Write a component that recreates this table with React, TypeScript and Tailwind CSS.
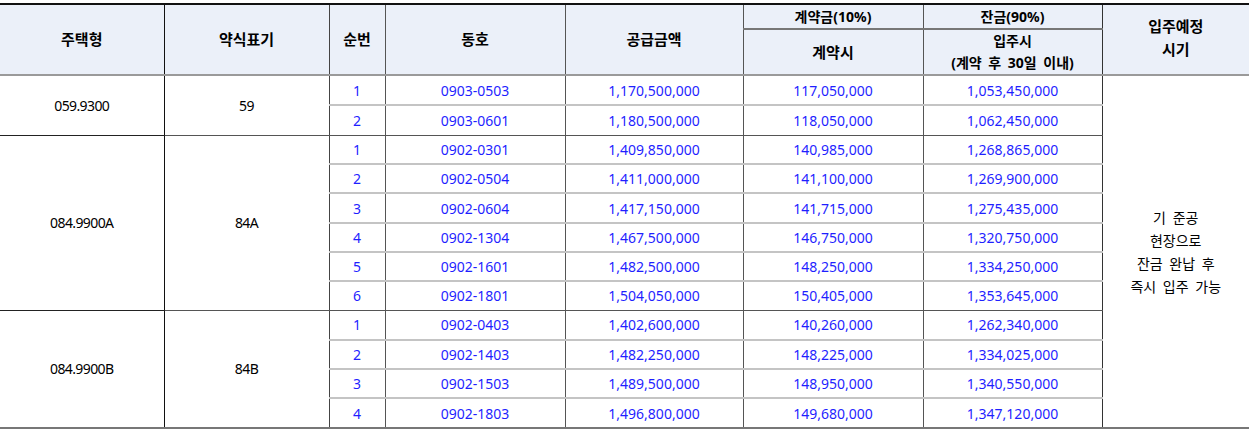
import React from 'react';

type Row = { seq: number; unit: string; price: string; deposit: string; balance: string };

const groups: { type: string; abbr: string; rows: Row[] }[] = [
  {
    type: '059.9300',
    abbr: '59',
    rows: [
      { seq: 1, unit: '0903-0503', price: '1,170,500,000', deposit: '117,050,000', balance: '1,053,450,000' },
      { seq: 2, unit: '0903-0601', price: '1,180,500,000', deposit: '118,050,000', balance: '1,062,450,000' },
    ],
  },
  {
    type: '084.9900A',
    abbr: '84A',
    rows: [
      { seq: 1, unit: '0902-0301', price: '1,409,850,000', deposit: '140,985,000', balance: '1,268,865,000' },
      { seq: 2, unit: '0902-0504', price: '1,411,000,000', deposit: '141,100,000', balance: '1,269,900,000' },
      { seq: 3, unit: '0902-0604', price: '1,417,150,000', deposit: '141,715,000', balance: '1,275,435,000' },
      { seq: 4, unit: '0902-1304', price: '1,467,500,000', deposit: '146,750,000', balance: '1,320,750,000' },
      { seq: 5, unit: '0902-1601', price: '1,482,500,000', deposit: '148,250,000', balance: '1,334,250,000' },
      { seq: 6, unit: '0902-1801', price: '1,504,050,000', deposit: '150,405,000', balance: '1,353,645,000' },
    ],
  },
  {
    type: '084.9900B',
    abbr: '84B',
    rows: [
      { seq: 1, unit: '0902-0403', price: '1,402,600,000', deposit: '140,260,000', balance: '1,262,340,000' },
      { seq: 2, unit: '0902-1403', price: '1,482,250,000', deposit: '148,225,000', balance: '1,334,025,000' },
      { seq: 3, unit: '0902-1503', price: '1,489,500,000', deposit: '148,950,000', balance: '1,340,550,000' },
      { seq: 4, unit: '0902-1803', price: '1,496,800,000', deposit: '149,680,000', balance: '1,347,120,000' },
    ],
  },
];

const rowHeights = [30, 30, 29, 29, 30, 29, 29, 29, 30, 29, 29, 30];

const App: React.FC = () => {
  let rowIndex = 0;

  return (
    <div
      className="w-[1251px] h-[430px] bg-white pt-[3px]"
      style={{ fontFamily: '"Noto Sans", "Noto Sans CJK KR", sans-serif' }}
    >
      <table className="w-[1249px] table-fixed border-collapse text-[14px] text-black">
        <colgroup>
          <col className="w-[164px]" />
          <col className="w-[165px]" />
          <col className="w-[56px]" />
          <col className="w-[180px]" />
          <col className="w-[178px]" />
          <col className="w-[180px]" />
          <col className="w-[179px]" />
          <col className="w-[147px]" />
        </colgroup>
        <thead className="text-[15px]">
          {/* Header */}
          <tr className="h-[25px] bg-[#ebf0f9]">
            <th rowSpan={2} className="border-t-2 border-t-[#111] border-b-2 border-b-[#9a9a9a] border-r border-r-[#111] font-bold">
              주택형
            </th>
            <th rowSpan={2} className="border-t-2 border-t-[#111] border-b-2 border-b-[#9a9a9a] border-r border-r-[#444] font-bold">
              약식표기
            </th>
            <th rowSpan={2} className="border-t-2 border-t-[#111] border-b-2 border-b-[#9a9a9a] border-r border-r-[#555] font-bold">
              순번
            </th>
            <th rowSpan={2} className="border-t-2 border-t-[#111] border-b-2 border-b-[#9a9a9a] border-r border-r-[#555] font-bold">
              동호
            </th>
            <th rowSpan={2} className="border-t-2 border-t-[#111] border-b-2 border-b-[#9a9a9a] border-r border-r-[#555] font-bold">
              공급금액
            </th>
            <th className="border-t-2 border-t-[#111] border-b-2 border-b-[#777] border-r border-r-[#555] font-bold text-[14px]">
              계약금(10%)
            </th>
            <th className="border-t-2 border-t-[#111] border-b-2 border-b-[#777] border-r border-r-[#333] font-bold text-[14px]">
              잔금(90%)
            </th>
            <th rowSpan={2} className="border-t-2 border-t-[#111] border-b-2 border-b-[#9a9a9a] font-bold leading-[23px] pb-[3px]">
              입주예정
              <br />
              시기
            </th>
          </tr>
          <tr className="h-[46px] bg-[#ebf0f9]">
            <th className="border-b-2 border-b-[#9a9a9a] border-r border-r-[#555] font-bold">계약시</th>
            <th className="border-b-2 border-b-[#9a9a9a] border-r border-r-[#333] font-bold text-[14px] leading-[22px] [word-spacing:3px]">
              입주시
              <br />
              (계약 후 30일 이내)
            </th>
          </tr>
        </thead>
        <tbody>
          {groups.map((group, gi) =>
            group.rows.map((row, ri) => {
              const h = rowHeights[rowIndex];
              const first = rowIndex === 0;
              rowIndex += 1;
              const lastInGroup = ri === group.rows.length - 1;
              const lastGroup = gi === groups.length - 1;
              const bottom = lastGroup && lastInGroup
                ? 'border-b-2 border-b-[#777]'
                : lastInGroup
                  ? 'border-b border-b-[#555]'
                  : 'border-b-2 border-b-[#c4c4c4]';
              return (
                <tr key={`${gi}-${ri}`} style={{ height: h }}>
                  {ri === 0 && (
                    <>
                      <td
                        rowSpan={group.rows.length}
                        className={`text-center tracking-[-0.6px] border-r border-r-[#111] ${lastGroup ? 'border-b-2 border-b-[#777]' : 'border-b border-b-[#222]'}`}
                      >
                        {group.type}
                      </td>
                      <td
                        rowSpan={group.rows.length}
                        className={`text-center tracking-[-0.6px] border-r border-r-[#444] ${lastGroup ? 'border-b-2 border-b-[#777]' : 'border-b border-b-[#555]'}`}
                      >
                        {group.abbr}
                      </td>
                    </>
                  )}
                  <td className={`text-center text-[#1f1fff] border-r border-r-[#555] ${bottom}`}>{row.seq}</td>
                  <td className={`text-center text-[#1f1fff] border-r border-r-[#555] ${bottom}`}>{row.unit}</td>
                  <td className={`text-center text-[#1f1fff] border-r border-r-[#555] ${bottom}`}>{row.price}</td>
                  <td className={`text-center text-[#1f1fff] border-r border-r-[#555] ${bottom}`}>{row.deposit}</td>
                  <td className={`text-center text-[#1f1fff] border-r border-r-[#333] ${bottom}`}>{row.balance}</td>
                  {first && (
                    <td rowSpan={12} className="text-center leading-[23px] border-b-2 border-b-[#777] [word-spacing:3px]">
                      기 준공
                      <br />
                      현장으로
                      <br />
                      잔금 완납 후
                      <br />
                      즉시 입주 가능
                    </td>
                  )}
                </tr>
              );
            })
          )}
        </tbody>
      </table>
    </div>
  );
};

export default App;
